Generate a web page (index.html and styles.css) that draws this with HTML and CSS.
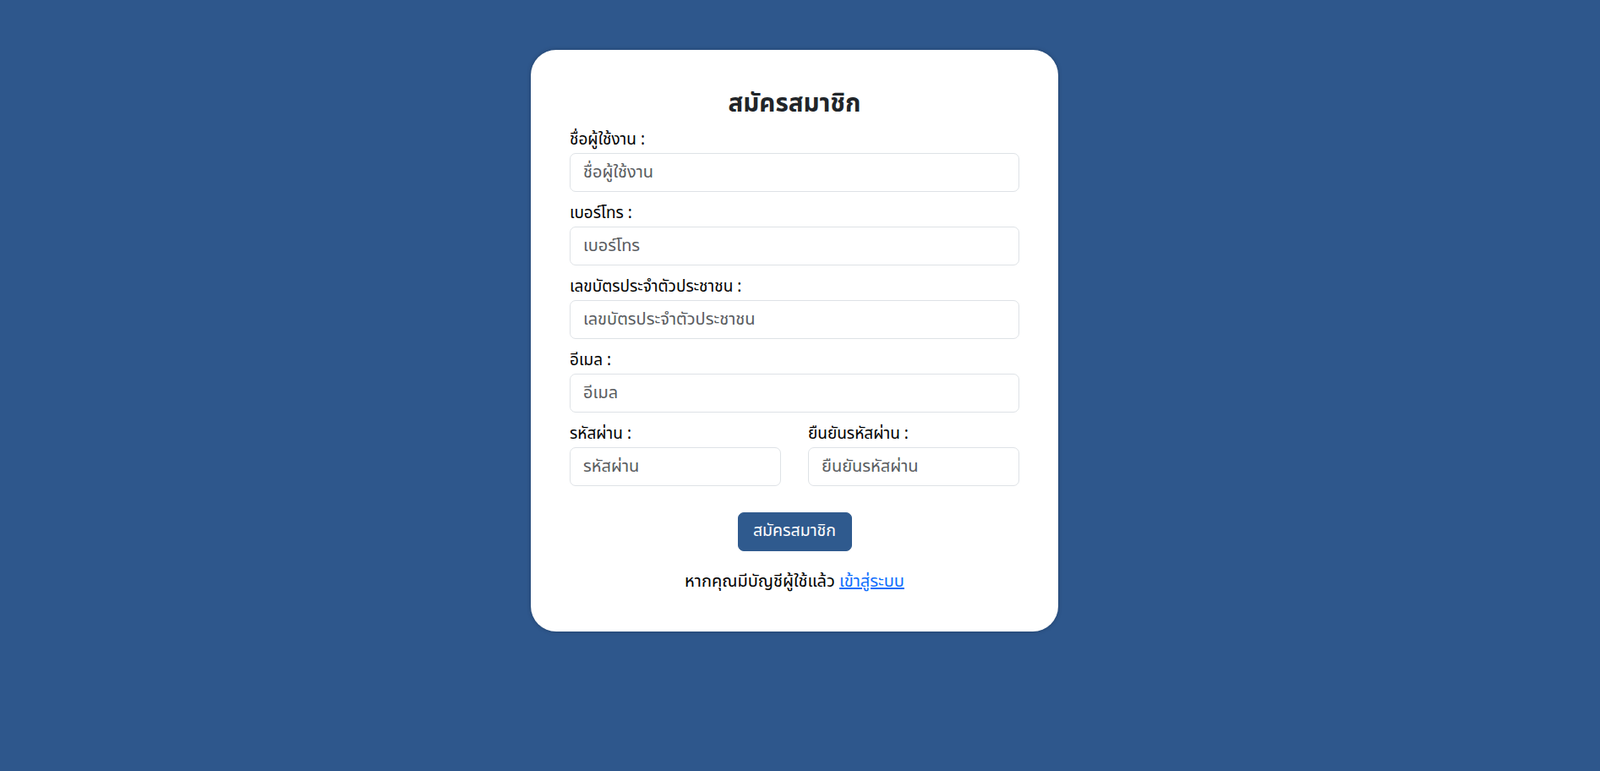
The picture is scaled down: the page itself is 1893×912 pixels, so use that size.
FILE: index.html
```html
<!DOCTYPE html>
<html lang="th">
<head>
<meta charset="utf-8">
<title>สมัครสมาชิก</title>
<link rel="stylesheet" href="styles.css">
</head>
<body>
<main class="page">
  <form class="card">
    <h2 class="title">สมัครสมาชิก</h2>
    <div class="group">
      <label class="label" for="username">ชื่อผู้ใช้งาน :</label>
      <input class="input" id="username" type="text" placeholder="ชื่อผู้ใช้งาน">
    </div>
    <div class="group">
      <label class="label" for="phone">เบอร์โทร :</label>
      <input class="input" id="phone" type="text" placeholder="เบอร์โทร">
    </div>
    <div class="group">
      <label class="label" for="idcard">เลขบัตรประจำตัวประชาชน :</label>
      <input class="input" id="idcard" type="text" placeholder="เลขบัตรประจำตัวประชาชน">
    </div>
    <div class="group">
      <label class="label" for="email">อีเมล :</label>
      <input class="input" id="email" type="email" placeholder="อีเมล">
    </div>
    <div class="row">
      <div class="group">
        <label class="label" for="pw">รหัสผ่าน :</label>
        <input class="input" id="pw" type="password" placeholder="รหัสผ่าน">
      </div>
      <div class="group">
        <label class="label" for="pw2">ยืนยันรหัสผ่าน :</label>
        <input class="input" id="pw2" type="password" placeholder="ยืนยันรหัสผ่าน">
      </div>
    </div>
    <div class="actions">
      <button class="btn" type="button">สมัครสมาชิก</button>
    </div>
    <p class="footer">หากคุณมีบัญชีผู้ใช้แล้ว <a class="link" href="#">เข้าสู่ระบบ</a></p>
  </form>
</main>
</body>
</html>
```

FILE: styles.css
```css
* { box-sizing: border-box; }

html, body {
  margin: 0;
  height: 100%;
}

body {
  background: #2e578c;
  font-family: "Noto Sans Thai", "Noto Sans", "DejaVu Sans", sans-serif;
  color: #212529;
  font-size: 16px;
  line-height: 1.5;
}

.page {
  display: flex;
  justify-content: center;
  padding: 59px 13px 0 0;
}

.card {
  width: 624px;
  background: #fff;
  border-radius: 30px;
  padding: 47px 46px 47px;
  box-shadow: 0 0 5px rgba(0, 0, 0, 0.25);
}

.title {
  margin: 0 0 14px;
  text-align: center;
  font-size: 29.5px;
  font-weight: 700;
  line-height: 34px;
  color: #212529;
}

.group {
  margin-bottom: 14px;
}

.label {
  display: block;
  margin-bottom: 3px;
  font-size: 19px;
  line-height: 24px;
  color: #000;
}

.input {
  display: block;
  width: 100%;
  height: 46px;
  padding: 0 15px;
  font: inherit;
  font-size: 20px;
  color: #212529;
  background: #fff;
  border: 1px solid #dee2e6;
  border-radius: 7px;
}

.input::placeholder {
  color: #595c5f;
}

.row {
  display: grid;
  grid-template-columns: 1fr 1fr;
  column-gap: 32px;
}

.actions {
  display: flex;
  justify-content: center;
  margin-top: 17px;
}

.btn {
  height: 46px;
  padding: 0 14px;
  min-width: 135px;
  font: inherit;
  font-size: 19.5px;
  color: #fff;
  background: #2f5a8e;
  border: 1px solid #2f5a8e;
  border-radius: 7px;
}

.footer {
  margin: 24px 0 0;
  text-align: center;
  font-size: 20px;
  line-height: 24px;
  color: #000;
}

.link {
  color: #0d6efd;
  text-decoration: underline;
}
```
